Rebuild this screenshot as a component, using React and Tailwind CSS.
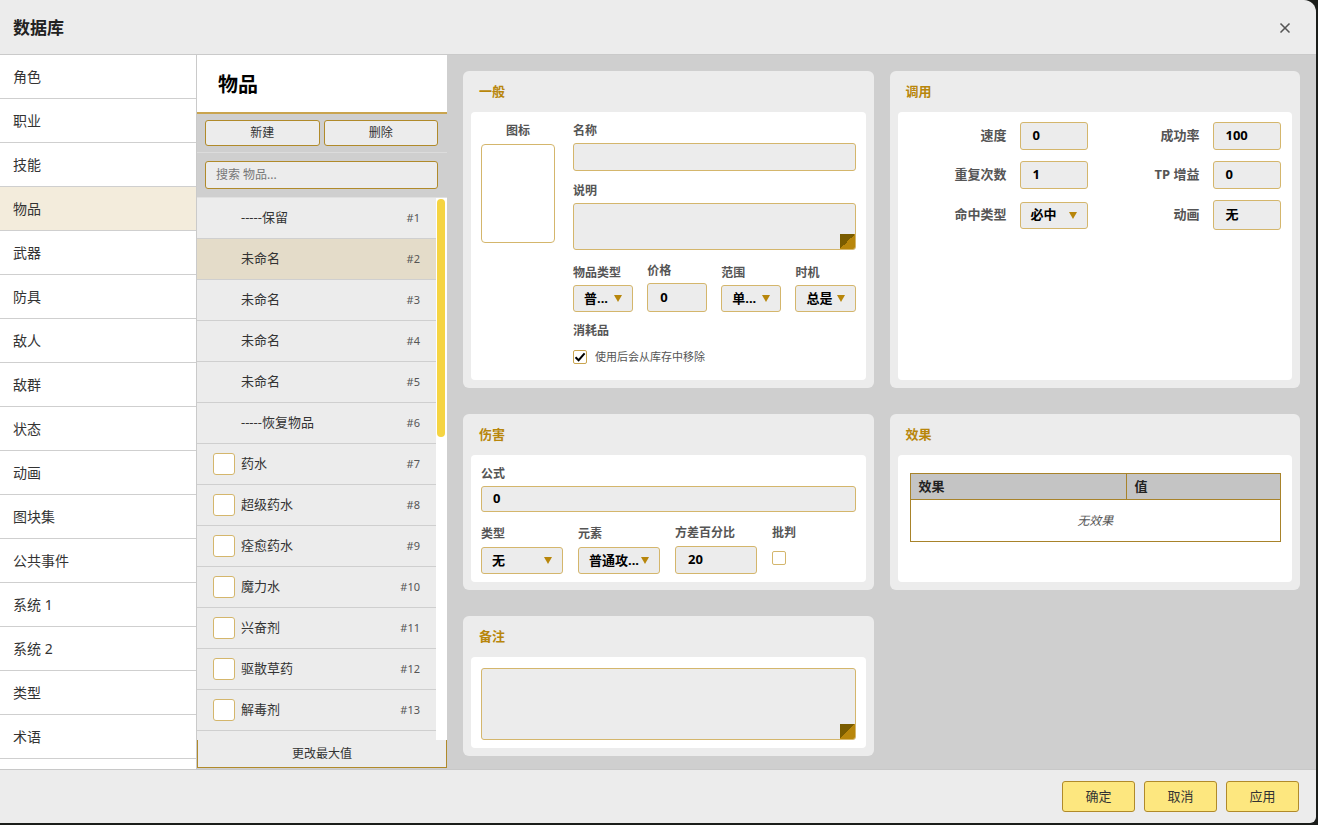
import React from 'react';
import { X } from 'lucide-react';

const navItems = ['角色', '职业', '技能', '物品', '武器', '防具', '敌人', '敌群', '状态', '动画', '图块集', '公共事件', '系统 1', '系统 2', '类型', '术语', ''];

const items = [
  { id: 1, name: '-----保留' },
  { id: 2, name: '未命名', active: true },
  { id: 3, name: '未命名' },
  { id: 4, name: '未命名' },
  { id: 5, name: '未命名' },
  { id: 6, name: '-----恢复物品' },
  { id: 7, name: '药水', icon: true },
  { id: 8, name: '超级药水', icon: true },
  { id: 9, name: '痊愈药水', icon: true },
  { id: 10, name: '魔力水', icon: true },
  { id: 11, name: '兴奋剂', icon: true },
  { id: 12, name: '驱散草药', icon: true },
  { id: 13, name: '解毒剂', icon: true },
  { id: 14, name: '', icon: false },
];

function Caret() {
  return <span className="w-0 h-0 border-l-[4px] border-r-[4px] border-t-[7px] border-l-transparent border-r-transparent border-t-[#b8860b]" />;
}

function Select({ value, w }) {
  return (
    <div className={`${w} h-[27px] bg-[#ececec] border border-[#d4b66c] rounded-[3px] flex items-center justify-between pl-2.5 pr-2.5 text-[13px] font-bold text-black`}>
      <span>{value}</span>
      <Caret />
    </div>
  );
}

function Field({ value, w, h = 'h-[28px]' }) {
  return (
    <div className={`${w} ${h} bg-[#ececec] border border-[#d4b66c] rounded-[3px] flex items-center px-3 text-[13px] font-bold text-black`}>
      {value}
    </div>
  );
}

function Grip() {
  return <span className="absolute right-0 bottom-0 w-[15px] h-[15px] bg-[linear-gradient(135deg,#7a5c00_50%,#b8860b_50%)]" />;
}

function Label({ children, className = '' }) {
  return <div className={`text-[12px] font-bold text-[#555] leading-4 ${className}`}>{children}</div>;
}

function Panel({ title, h, children }) {
  return (
    <div className={`${h} bg-[#ececec] rounded-md flex flex-col`}>
      <div className="h-[41px] shrink-0 flex items-center px-4 text-[13px] font-bold text-[#b8860b]">{title}</div>
      <div className="flex-1 mx-2 mb-2 bg-white rounded">{children}</div>
    </div>
  );
}

export default function App() {
  return (
    <div className="w-[1318px] h-[825px] bg-[#1b1d1a] font-['Noto_Sans','Noto_Sans_CJK_SC',sans-serif] text-[#333]">
      <div className="w-[1316px] h-[823px] bg-[#ececec] rounded-tr-xl rounded-br-md flex flex-col overflow-hidden">
        {/* header */}
        <div className="h-[55px] shrink-0 border-b border-[#cacaca] flex items-center justify-between pl-[13px] pr-[23px] pt-[2px]">
          <span className="text-[17px] font-bold text-[#222]">数据库</span>
          <X size={16} strokeWidth={2.5} className="text-[#555]" />
        </div>

        <div className="flex h-[714px] shrink-0 overflow-hidden">
          {/* left nav */}
          <div className="w-[197px] shrink-0 bg-white border-r border-[#cacaca] overflow-hidden">
            {navItems.map((n, i) => (
              <div key={i} className={`h-[44px] border-b border-[#cfcfcf] flex items-center pl-[13px] text-[14px] text-[#333] ${n === '物品' ? 'bg-[#f3ecdc]' : ''}`}>
                {n}
              </div>
            ))}
          </div>

          {/* item list */}
          <div className="w-[250px] shrink-0 flex flex-col bg-[#cfcfcf]">
            <div className="h-[57px] shrink-0 bg-white flex items-center pl-[21px] pt-[2px] text-[20px] font-bold text-black">物品</div>
            <div className="h-[2px] shrink-0 bg-[#c9a44f]" />
            <div className="py-[6px] pl-2 pr-[9px] flex gap-1 border-b border-[#dcdcdc]">
              <button className="flex-1 h-[26px] bg-[#ececec] border border-[#b08a2a] rounded-[3px] text-[12px] text-[#333]">新建</button>
              <button className="flex-1 h-[26px] bg-[#ececec] border border-[#b08a2a] rounded-[3px] text-[12px] text-[#333]">删除</button>
            </div>
            <div className="pt-[8px] pb-[8px] pl-2 pr-[9px] border-b border-[#e0e0e0]">
              <div className="h-[28px] bg-[#ececec] border border-[#b08a2a] rounded-[3px] flex items-center px-2.5 text-[12px] text-[#777]">搜索 物品...</div>
            </div>
            <div className="flex h-[542px] overflow-hidden">
              <div className="flex-1 overflow-hidden bg-[#ececec]">
                {items.map((it) => (
                  <div key={it.id} className={`h-[41px] shrink-0 border-b border-[#cfcfcf] flex items-center pl-4 pr-4 ${it.active ? 'bg-[#e4dcc9]' : ''}`}>
                    {it.icon ? (
                      <span className="w-[22px] h-[22px] bg-white border border-[#d4b66c] rounded-[3px] shrink-0" />
                    ) : (
                      <span className="w-[22px] shrink-0" />
                    )}
                    <span className="ml-[6px] flex-1 text-[13px] text-[#333]">{it.name}</span>
                    {it.name && <span className="text-[11px] text-[#555]">#{it.id}</span>}
                  </div>
                ))}
              </div>
              <div className="w-[11px] bg-white pt-[1px] pl-[1px]">
                <div className="w-[8px] h-[238px] bg-[#f5d442] rounded-full" />
              </div>
            </div>
            <div className="h-[28px] shrink-0 bg-[#ececec] border-l border-r border-b border-[#b08a2a] flex items-center justify-center text-[12px] text-[#333]">更改最大值</div>
          </div>

          {/* editor */}
          <div className="flex-1 bg-[#cfcfcf] pl-4 pr-4 pt-4 overflow-hidden">
            <div className="grid grid-cols-2 gap-x-4 gap-y-[26px]">
              {/* 一般 */}
              <Panel title="一般" h="h-[317px]">
                <div className="flex pl-[10px] pr-[10px] pt-[11px]">
                  <div className="w-[74px] shrink-0 flex flex-col items-center">
                    <Label>图标</Label>
                    <div className="mt-[5px] w-[74px] h-[99px] border border-[#d4b66c] rounded-[4px] bg-white" />
                  </div>
                  <div className="ml-[18px] flex-1">
                    <Label>名称</Label>
                    <div className="mt-[4px] h-[28px] bg-[#ececec] border border-[#d4b66c] rounded-[3px]" />
                    <Label className="mt-3">说明</Label>
                    <div className="relative mt-[4px] h-[47px] bg-[#ececec] border border-[#d4b66c] rounded-[3px] overflow-hidden">
                      <Grip />
                    </div>
                    <div className="mt-[13px] grid grid-cols-4 gap-x-[14px] items-end">
                      <div>
                        <Label className="mb-[4px]">物品类型</Label>
                        <Select value="普..." w="w-full" />
                      </div>
                      <div>
                        <Label className="mb-[4px]">价格</Label>
                        <Field value="0" w="w-full" h="h-[29px]" />
                      </div>
                      <div>
                        <Label className="mb-[4px]">范围</Label>
                        <Select value="单..." w="w-full" />
                      </div>
                      <div>
                        <Label className="mb-[4px]">时机</Label>
                        <Select value="总是" w="w-full" />
                      </div>
                    </div>
                    <Label className="mt-[11px]">消耗品</Label>
                    <div className="mt-[10px] flex items-center">
                      <span className="w-[14px] h-[14px] border border-[#c9a44f] rounded-[2px] bg-white flex items-center justify-center">
                        <svg width="12" height="12" viewBox="0 0 12 12"><path d="M1.5 6.2 L4.6 9.2 L10.6 2.4" fill="none" stroke="#000" strokeWidth="2" /></svg>
                      </span>
                      <span className="ml-2 text-[11px] text-[#555]">使用后会从库存中移除</span>
                    </div>
                  </div>
                </div>
              </Panel>

              {/* 调用 */}
              <Panel title="调用" h="h-[317px]">
                <div className="pl-[10px] pr-[11px] pt-[10px] flex flex-col gap-[11px]">
                  {[
                    [['速度', <Field key="a" value="0" w="w-[68px]" />], ['成功率', <Field key="b" value="100" w="w-[68px]" />]],
                    [['重复次数', <Field key="c" value="1" w="w-[68px]" />], ['TP 增益', <Field key="d" value="0" w="w-[68px]" />]],
                    [['命中类型', <Select key="e" value="必中" w="w-[68px]" />], ['动画', <Field key="f" value="无" w="w-[68px]" h="h-[30px]" />]],
                  ].map((row, i) => (
                    <div key={i} className="flex gap-[13px] items-center">
                      {row.map(([label, ctrl]) => (
                        <div key={label} className="w-[180px] flex items-center gap-[13px]">
                          <span className="w-[99px] text-right text-[13px] font-bold text-[#555]">{label}</span>
                          {ctrl}
                        </div>
                      ))}
                    </div>
                  ))}
                </div>
              </Panel>

              {/* 伤害 */}
              <Panel title="伤害" h="h-[176px]">
                <div className="px-[10px] pt-[11px]">
                  <Label>公式</Label>
                  <div className="mt-[4px] h-[26px] bg-[#ececec] border border-[#d4b66c] rounded-[3px] flex items-center px-[11px] text-[13px] font-bold text-black">0</div>
                  <div className="mt-[13px] grid grid-cols-[82px_82px_82px_82px] gap-x-[15px] items-end">
                    <div>
                      <Label className="mb-[5px]">类型</Label>
                      <Select value="无" w="w-full" />
                    </div>
                    <div>
                      <Label className="mb-[5px]">元素</Label>
                      <Select value="普通攻..." w="w-full" />
                    </div>
                    <div>
                      <Label className="mb-[5px]">方差百分比</Label>
                      <Field value="20" w="w-full" />
                    </div>
                    <div className="self-start">
                      <Label className="mb-[5px]">批判</Label>
                      <span className="block mt-[10px] w-[14px] h-[14px] border border-[#d4b66c] rounded-[2px] bg-white" />
                    </div>
                  </div>
                </div>
              </Panel>

              {/* 效果 */}
              <Panel title="效果" h="h-[176px]">
                <div className="pl-[12px] pr-[11px] pt-[18px]">
                  <div className="border border-[#a8832a]">
                    <div className="flex h-[26px] bg-[#c4c4c4] border-b border-[#a8832a] text-[13px] font-bold text-[#222]">
                      <div className="w-[216px] border-r border-[#a8832a] flex items-center pl-2">效果</div>
                      <div className="flex-1 flex items-center pl-2">值</div>
                    </div>
                    <div className="h-[41px] flex items-center justify-center text-[12px] italic text-[#555]">无效果</div>
                  </div>
                </div>
              </Panel>

              {/* 备注 */}
              <Panel title="备注" h="h-[140px]">
                <div className="px-[10px] pt-[11px]">
                  <div className="relative h-[72px] bg-[#ececec] border border-[#d4b66c] rounded-[3px] overflow-hidden">
                    <Grip />
                  </div>
                </div>
              </Panel>
            </div>
          </div>
        </div>

        {/* footer */}
        <div className="flex-1 border-t border-[#c8c8c8] flex items-start justify-end gap-[9px] pt-[11px] pr-[17px]">
          {['确定', '取消', '应用'].map((b) => (
            <button key={b} className="w-[73px] h-[31px] bg-[#fde77f] border border-[#b08a2a] rounded-[3px] text-[13px] text-[#333]">{b}</button>
          ))}
        </div>
      </div>
    </div>
  );
}
